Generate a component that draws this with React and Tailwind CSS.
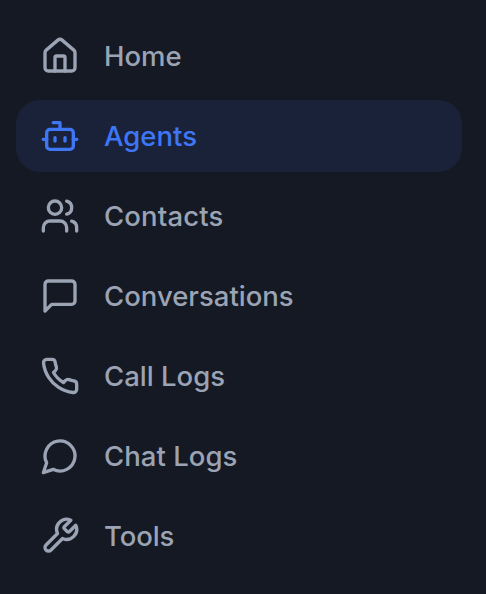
import React from "react";
import { House, Bot, Users } from "lucide-react";

function StrokeIcon({ d, className }) {
  return (
    <svg
      viewBox="0 0 24 24"
      fill="none"
      stroke="currentColor"
      strokeWidth="2"
      strokeLinecap="round"
      strokeLinejoin="round"
      className={className}
    >
      <path d={d} />
    </svg>
  );
}

const MessageIcon = (props) => (
  <StrokeIcon {...props} d="M21 15a2 2 0 0 1-2 2H7l-4 4V5a2 2 0 0 1 2-2h14a2 2 0 0 1 2 2z" />
);
const PhoneIcon = (props) => (
  <StrokeIcon
    {...props}
    d="M22 16.92v3a2 2 0 0 1-2.18 2 19.79 19.79 0 0 1-8.63-3.07 19.5 19.5 0 0 1-6-6 19.79 19.79 0 0 1-3.07-8.67A2 2 0 0 1 4.11 2h3a2 2 0 0 1 2 1.72 12.84 12.84 0 0 0 .7 2.81 2 2 0 0 1-.45 2.11L8.09 9.91a16 16 0 0 0 6 6l1.27-1.27a2 2 0 0 1 2.11-.45 12.84 12.84 0 0 0 2.81.7A2 2 0 0 1 22 16.92z"
  />
);
const ChatIcon = (props) => <StrokeIcon {...props} d="M7.9 20A9 9 0 1 0 4 16.1L2 22Z" />;
const ToolIcon = (props) => (
  <StrokeIcon
    {...props}
    d="M14.7 6.3a1 1 0 0 0 0 1.4l1.6 1.6a1 1 0 0 0 1.4 0l3.77-3.77a6 6 0 0 1-7.94 7.94l-6.91 6.91a2.12 2.12 0 0 1-3-3l6.91-6.91a6 6 0 0 1 7.94-7.94l-3.76 3.76z"
  />
);

const items = [
  { label: "Home", Icon: House, tracking: "tracking-normal" },
  { label: "Agents", Icon: Bot, tracking: "tracking-normal", active: true },
  { label: "Contacts", Icon: Users, tracking: "tracking-[0.15px]" },
  { label: "Conversations", Icon: MessageIcon, tracking: "tracking-normal" },
  { label: "Call Logs", Icon: PhoneIcon, tracking: "tracking-normal" },
  { label: "Chat Logs", Icon: ChatIcon, tracking: "tracking-[0.05px]" },
  { label: "Tools", Icon: ToolIcon, tracking: "tracking-[-0.1px]" },
];

export default function App() {
  return (
    <nav className="flex h-[594px] w-[486px] flex-col gap-2 overflow-hidden bg-[#151923] pt-5 pr-6 pl-4 font-['Inter',sans-serif]">
      {items.map(({ label, Icon, tracking, active }) => (
        <a
          key={label}
          className={
            active
              ? "flex h-[72px] shrink-0 items-center gap-6 rounded-3xl bg-[#1a2239] px-6 text-[#3e76f6]"
              : "flex h-[72px] shrink-0 items-center gap-6 rounded-3xl px-6 text-[#9ba4b4]"
          }
        >
          <Icon className="size-10 shrink-0" />
          <span className={`text-[27.5px] leading-10 font-medium ${tracking}`}>{label}</span>
        </a>
      ))}
    </nav>
  );
}
